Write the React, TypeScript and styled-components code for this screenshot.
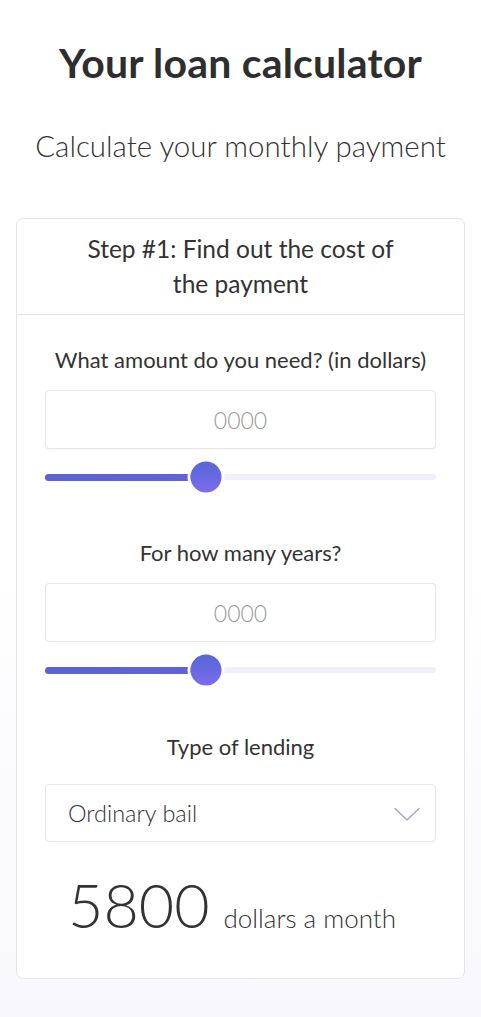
import React from "react";
import styled, { createGlobalStyle } from "styled-components";

const GlobalStyle = createGlobalStyle`
  html, body {
    margin: 0;
    padding: 0;
  }
  body {
    font-family: "Lato", "Noto Sans", sans-serif;
    color: #333333;
    background: #ffffff;
  }
`;

type SliderProps = { value: number };

const Slider = ({ value }: SliderProps) => {
  return (
    <SliderWrap>
      <Track>
        <Fill style={{ width: `${value}%` }} />
      </Track>
      <Thumb style={{ left: `${value}%` }} />
    </SliderWrap>
  );
};

type FieldProps = { label: string; gap?: number };

const Field = ({ label, gap = 0 }: FieldProps) => {
  return (
    <FieldBox $gap={gap}>
      <Label>{label}</Label>
      <NumberInput placeholder="0000" />
      <Slider value={41.3} />
    </FieldBox>
  );
};

const App = () => {
  return (
    <Page>
      <GlobalStyle />
      <Title>Your loan calculator</Title>
      <Subtitle>Calculate your monthly payment</Subtitle>
      <Card>
        <CardHeader>
          Step #1: Find out the cost of
          <br />
          the payment
        </CardHeader>
        <CardBody>
          <Field label="What amount do you need? (in dollars)" />
          <Field label="For how many years?" gap={46} />
          <SelectBlock>
            <Label>Type of lending</Label>
            <Select>
              <span>Ordinary bail</span>
              <svg width="26" height="15" viewBox="0 0 26 15" fill="none">
                <polyline
                  points="1,1.5 13,13 25,1.5"
                  stroke="#aaa4d8"
                  strokeWidth="1.6"
                  strokeLinecap="round"
                  strokeLinejoin="round"
                />
              </svg>
            </Select>
          </SelectBlock>
          <Result>
            <Amount>5800</Amount>
            <Unit>dollars a month</Unit>
          </Result>
        </CardBody>
      </Card>
    </Page>
  );
};

export default App;

const Page = styled.div`
  min-height: 1017px;
  box-sizing: border-box;
  padding: 39px 16px 40px;
  background: linear-gradient(180deg, #ffffff 0%, #ffffff 55%, #f8f7fd 100%);
`;

const Title = styled.h1`
  margin: 0;
  text-align: center;
  font-size: 41px;
  line-height: 48px;
  font-weight: 700;
  color: #2e2e2e;
  letter-spacing: 0.2px;
`;

const Subtitle = styled.p`
  margin: 39px 0 0;
  text-align: center;
  font-size: 29.5px;
  line-height: 40px;
  font-weight: 300;
  color: #333333;
`;

const Card = styled.div`
  margin-top: 52px;
  background: #ffffff;
  border: 1px solid #e4e4ec;
  border-radius: 7px;
`;

const CardHeader = styled.div`
  padding: 12px 20px 13px;
  text-align: center;
  font-size: 24.5px;
  line-height: 35px;
  font-weight: 400;
  color: #333333;
  border-bottom: 1px solid #e4e4ec;
`;

const CardBody = styled.div`
  padding: 31px 28px 37px;
  display: flex;
  flex-direction: column;
`;

const FieldBox = styled.div<{ $gap: number }>`
  display: flex;
  flex-direction: column;
  margin-top: ${(p) => p.$gap}px;
`;

const Label = styled.div`
  text-align: center;
  font-size: 22px;
  line-height: 28px;
  color: #333333;
`;

const NumberInput = styled.input`
  margin-top: 16px;
  height: 59px;
  box-sizing: border-box;
  width: 100%;
  border: 1px solid #e6e6ec;
  border-radius: 4px;
  text-align: center;
  font-family: inherit;
  font-size: 23px;
  font-weight: 300;
  color: #333333;
  outline: none;
  box-shadow: 0 1px 2px rgba(0, 0, 0, 0.03);

  &::placeholder {
    color: #9a9a9a;
  }
`;

const SliderWrap = styled.div`
  position: relative;
  margin-top: 12px;
  height: 32px;
  display: flex;
  align-items: center;
`;

const Track = styled.div`
  flex: 1;
  height: 6px;
  border-radius: 3px;
  background: #f0effa;
  position: relative;
`;

const Fill = styled.div`
  height: 7px;
  margin-top: -0.5px;
  border-radius: 4px;
  background: linear-gradient(90deg, #5a62d4 0%, #5f63da 100%);
`;

const Thumb = styled.div`
  position: absolute;
  top: 50%;
  width: 31px;
  height: 31px;
  border-radius: 50%;
  transform: translate(-50%, -50%);
  background: linear-gradient(180deg, #5467d6 0%, #7d6bee 100%);
  box-shadow: 0 0 0 3px #ffffff;
`;

const SelectBlock = styled.div`
  margin-top: 47px;
  display: flex;
  flex-direction: column;
`;

const Select = styled.div`
  margin-top: 23px;
  height: 58px;
  box-sizing: border-box;
  border: 1px solid #e6e6ec;
  border-radius: 4px;
  padding: 0 15px 0 22px;
  display: flex;
  align-items: center;
  justify-content: space-between;
  font-size: 23.5px;
  font-weight: 300;
  color: #333333;
  box-shadow: 0 1px 2px rgba(0, 0, 0, 0.03);

  svg {
    margin-top: 3px;
  }
`;

const Result = styled.div`
  margin-top: 27px;
  padding-left: 23px;
  display: flex;
  align-items: baseline;
  gap: 14px;
  height: 72px;
  line-height: 72px;
`;

const Amount = styled.span`
  font-size: 61px;
  font-weight: 300;
  color: #333333;
`;

const Unit = styled.span`
  font-size: 26px;
  font-weight: 300;
  color: #333333;
`;
